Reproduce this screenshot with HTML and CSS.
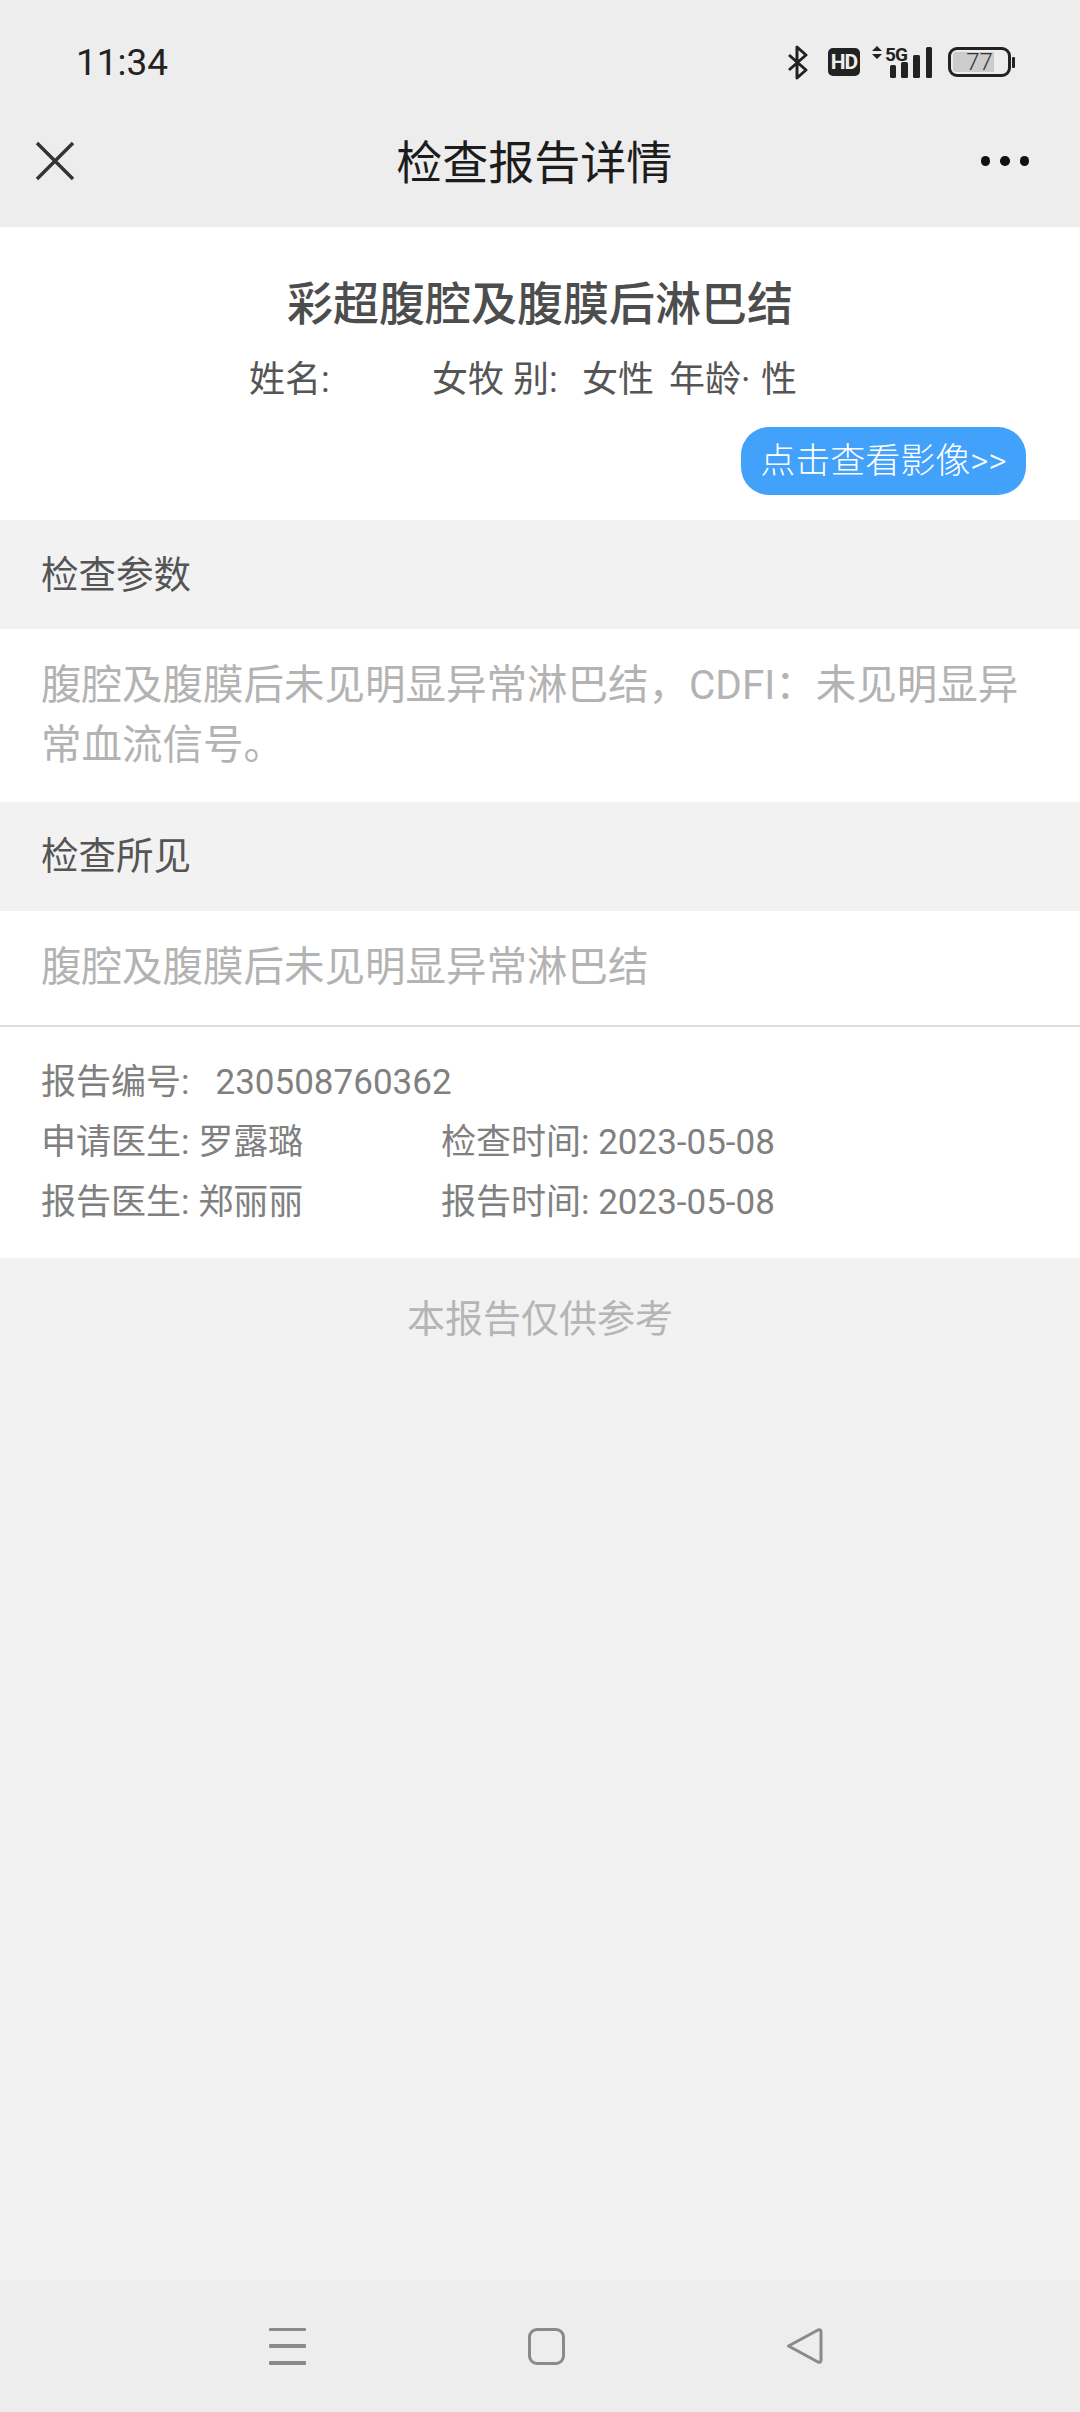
FILE: index.html
```html
<!DOCTYPE html>
<html lang="zh-CN">
  <head>
    <meta charset="utf-8" />
    <title>检查报告详情</title>
    <link rel="stylesheet" href="styles.css">
  </head>

  <body>
    <header class="top">
      <div class="status">
        <span class="time">11:34</span>
        <div class="status-icons">
          <svg class="ic-bt" width="22" height="35" viewBox="0 0 22 35">
            <path d="M2 10 L19 25 L10 33 V2 L19 10 L2 25" fill="none" stroke="#222" stroke-width="3" stroke-linejoin="round"/>
          </svg>
          <span class="hd">HD</span>
          <svg class="ic-signal" width="62" height="34" viewBox="0 0 62 34">
            <path d="M0 6 L5 1 L10 6 Z M0 9 H10 L5 14 Z" fill="#222"/>
            <text x="13" y="16" class="five-g">5G</text>
            <rect x="18" y="20" width="6" height="13" rx="1.5" fill="#222"/>
            <rect x="29" y="17" width="7" height="16" rx="1.5" fill="#222"/>
            <rect x="41" y="10" width="7" height="23" rx="1.5" fill="#222"/>
            <rect x="54" y="2" width="6" height="31" rx="1.5" fill="#222"/>
          </svg>
          <div class="battery">
            <div class="battery-body">
              <div class="battery-fill"></div>
              <span class="battery-num">77</span>
            </div>
            <div class="battery-nub"></div>
          </div>
        </div>
      </div>
      <nav class="nav">
        <svg width="40" height="40" viewBox="0 0 40 40">
          <path d="M2 2 L38 38 M38 2 L2 38" stroke="#333" stroke-width="3.4" fill="none"/>
        </svg>
        <h1>检查报告详情</h1>
        <div class="dots"><i></i><i></i><i></i></div>
      </nav>
    </header>

    <main class="page">
      <section class="summary">
        <h2>彩超腹腔及腹膜后淋巴结</h2>
        <p class="patient">
          <span class="p-name">姓名:</span>
          <span class="p-sex">女牧 别:</span>
          <span class="p-val">女性</span>
          <span class="p-age">年龄·</span>
          <span>性</span>
        </p>
        <div class="btn-row">
          <a class="btn">点击查看影像&gt;&gt;</a>
        </div>
      </section>

      <h3 class="sec-title">检查参数</h3>
      <div class="sec-body">腹腔及腹膜后未见明显异常淋巴结，CDFI：未见明显异常血流信号。</div>

      <h3 class="sec-title sec-title-seen">检查所见</h3>
      <div class="sec-body sec-last">腹腔及腹膜后未见明显异常淋巴结</div>

      <div class="info">
        <div class="info-wide">报告编号:&nbsp;&nbsp;&nbsp;230508760362</div>
        <div>申请医生: 罗露璐</div>
        <div>检查时间: 2023-05-08</div>
        <div>报告医生: 郑丽丽</div>
        <div>报告时间: 2023-05-08</div>
      </div>

      <p class="note">本报告仅供参考</p>
    </main>

    <footer class="softkeys">
      <div class="menu-key"><i></i><i></i><i></i></div>
      <div class="home-key"></div>
      <svg width="38" height="36" viewBox="0 0 38 36">
        <path d="M3.5 18 L33 2 Q36 1 36 4 V32 Q36 35 33 34 Z" fill="none" stroke="#8a8a8a" stroke-width="3" stroke-linejoin="round"/>
      </svg>
    </footer>
  </body>
</html>
```

FILE: styles.css
```css
html {
  font-family: Roboto, "Noto Sans CJK SC", sans-serif;
}

body {
  margin: 0;
  width: 1080px;
  height: 2412px;
  display: flex;
  flex-direction: column;
  background: #f2f2f2;
  overflow: hidden;
}

h1, h2, h3, p {
  margin: 0;
  font-weight: 400;
}

.top {
  background: #ededed;
  height: 227px;
}

.status {
  height: 124px;
  display: flex;
  align-items: center;
  justify-content: space-between;
  padding: 0 65px 0 76px;
}
.time {
  font-size: 37px;
  color: #222;
}
.status-icons {
  display: flex;
  align-items: center;
  gap: 12px;
}
.ic-bt {
  margin-right: 7px;
}
.ic-signal {
  overflow: visible;
}
.hd {
  width: 32px;
  height: 28px;
  background: #222;
  color: #ededed;
  border-radius: 5px;
  font-size: 21px;
  font-weight: 700;
  line-height: 28px;
  text-align: center;
  letter-spacing: -1px;
}
.five-g {
  font-family: Roboto, sans-serif;
  font-size: 19px;
  font-weight: 700;
  fill: #222;
  letter-spacing: -1px;
}
.battery {
  display: flex;
  align-items: center;
  gap: 1px;
  margin-left: 2px;
}
.battery-body {
  width: 63px;
  height: 30px;
  box-sizing: border-box;
  border: 3px solid #222;
  border-radius: 9px;
  position: relative;
  display: flex;
  align-items: center;
  justify-content: center;
}
.battery-fill {
  position: absolute;
  left: 2px;
  top: 2px;
  bottom: 2px;
  width: 41px;
  background: #ccc;
  border-radius: 3px 0 0 3px;
}
.battery-num {
  position: relative;
  font-size: 24px;
  font-weight: 300;
  color: #333;
}
.battery-nub {
  width: 3px;
  height: 11px;
  background: #222;
  border-radius: 1px;
}

.nav {
  height: 103px;
  display: flex;
  align-items: center;
  justify-content: space-between;
  padding: 0 51px 29px 35px;
  box-sizing: border-box;
}
.nav h1 {
  font-size: 46px;
  color: #1c1c1c;
  margin: -4px 0 0 13px;
}
.dots {
  display: flex;
  gap: 10px;
}
.dots i {
  width: 9.5px;
  height: 9.5px;
  background: #111;
  border-radius: 50%;
}

.summary {
  background: #fff;
  height: 293px;
  box-sizing: border-box;
  padding-top: 47px;
  text-align: center;
}
.summary h2 {
  font-size: 46px;
  line-height: 60px;
  color: #4d4d4d;
  font-weight: 500;
}
.patient {
  display: flex;
  padding-left: 249px;
  margin-top: 16px;
  font-size: 36px;
  line-height: 60px;
  color: #555;
  white-space: pre;
}
.p-name {
  width: 183px;
  text-align: left;
}
.p-sex {
  width: 150px;
  text-align: left;
}
.p-val {
  width: 87px;
  text-align: left;
}
.p-age {
  width: 92px;
  text-align: left;
}
.btn-row {
  display: flex;
  justify-content: flex-end;
  padding-right: 54px;
  margin-top: 17px;
}
.btn {
  position: relative;
  width: 285px;
  height: 68px;
  line-height: 69px;
  background: #42a1fb;
  color: #fff;
  border-radius: 28px;
  font-size: 35px;
  font-weight: 300;
  text-align: center;
  white-space: nowrap;
}
/* small nick in the top left corner of the button */
.btn::before {
  content: "";
  position: absolute;
  left: 2px;
  top: 0;
  width: 14px;
  height: 13px;
  background: #fff;
  clip-path: polygon(0 0, 100% 0, 0 100%);
}

.sec-title {
  height: 109px;
  box-sizing: border-box;
  padding: 0 0 6px 41px;
  display: flex;
  align-items: center;
  font-size: 37.5px;
  color: #555;
}
.sec-title-seen {
  padding-bottom: 9px;
}
.sec-body {
  background: #fff;
  padding: 26px 41px 27px;
  font-size: 40.5px;
  line-height: 60px;
  color: #b3b3b3;
}
.sec-last {
  padding-bottom: 28px;
}

.info {
  background: #fff;
  border-top: 2px solid #ddd;
  padding: 26px 41px 25px;
  display: grid;
  grid-template-columns: 400px 1fr;
  font-size: 35px;
  line-height: 60px;
  color: #808080;
}
.info-wide {
  grid-column: 1 / -1;
}

.page {
  flex: 1;
}
.note {
  margin-top: 31px;
  text-align: center;
  font-size: 38px;
  line-height: 60px;
  color: #b5b5b5;
}

.softkeys {
  height: 132px;
  background: #ededed;
  display: flex;
  align-items: center;
  padding: 0 0 0 269px;
  box-sizing: border-box;
}
.menu-key {
  width: 37px;
  height: 37px;
  display: flex;
  flex-direction: column;
  justify-content: space-between;
  margin-right: 222px;
}
.menu-key i {
  height: 3.5px;
  background: #8a8a8a;
  border-radius: 1px;
}
.home-key {
  width: 37px;
  height: 37px;
  box-sizing: border-box;
  border: 3px solid #8a8a8a;
  border-radius: 9px;
  margin-right: 220px;
}
```
